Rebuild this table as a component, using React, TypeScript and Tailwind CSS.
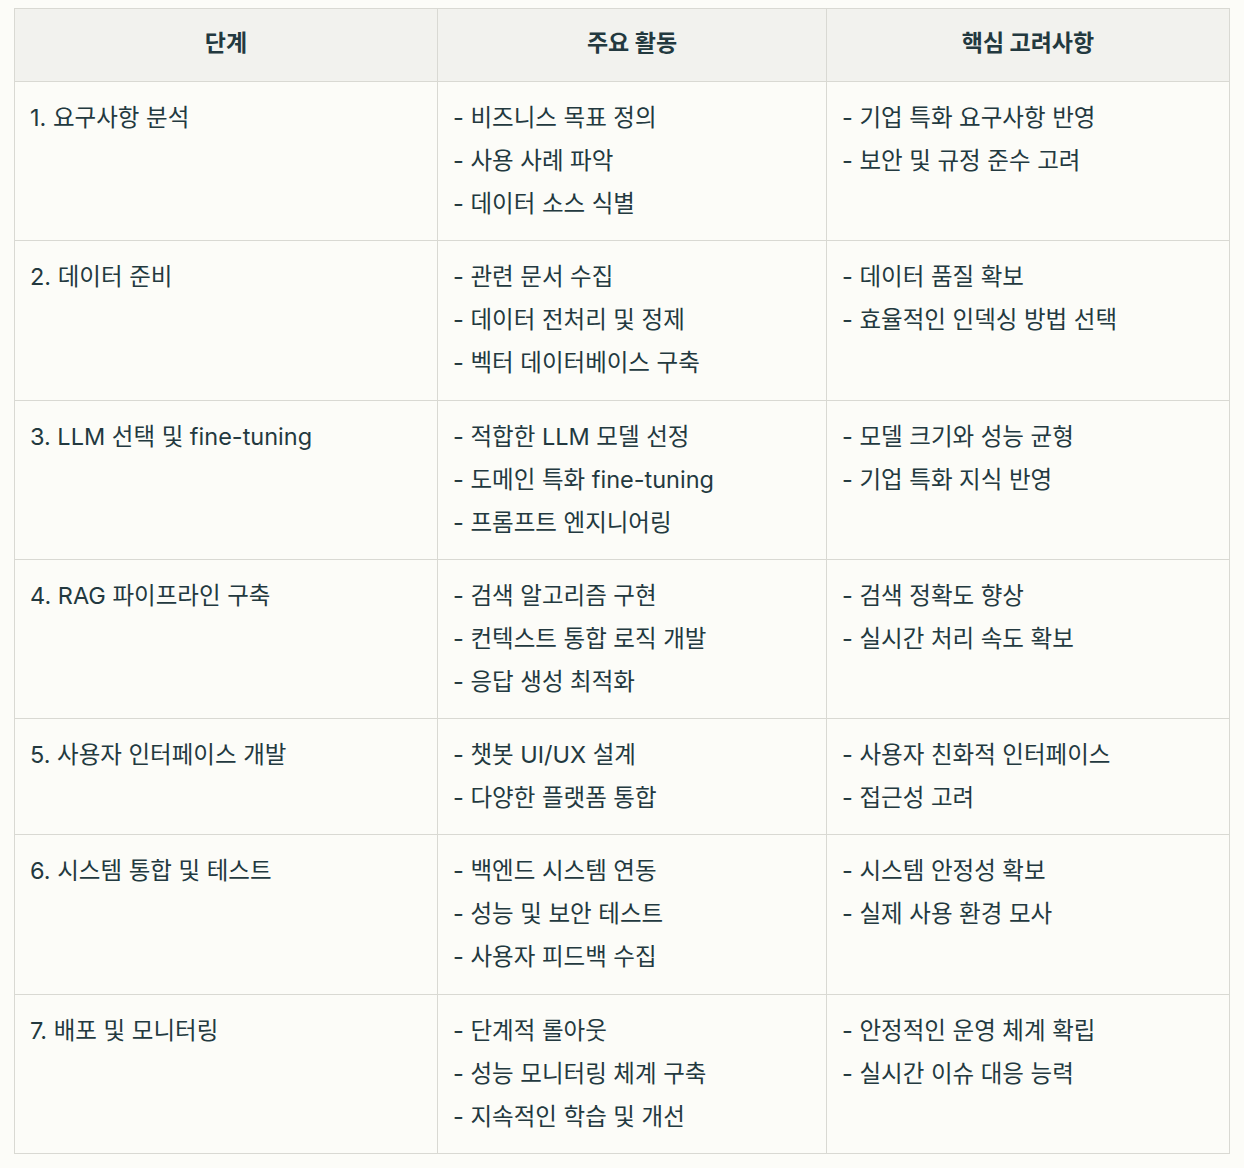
import React from 'react';

const rows: { step: string; acts: string[]; notes: string[] }[] = [
  { step: '1. 요구사항 분석', acts: ['비즈니스 목표 정의', '사용 사례 파악', '데이터 소스 식별'], notes: ['기업 특화 요구사항 반영', '보안 및 규정 준수 고려'] },
  { step: '2. 데이터 준비', acts: ['관련 문서 수집', '데이터 전처리 및 정제', '벡터 데이터베이스 구축'], notes: ['데이터 품질 확보', '효율적인 인덱싱 방법 선택'] },
  { step: '3. LLM 선택 및 fine-tuning', acts: ['적합한 LLM 모델 선정', '도메인 특화 fine-tuning', '프롬프트 엔지니어링'], notes: ['모델 크기와 성능 균형', '기업 특화 지식 반영'] },
  { step: '4. RAG 파이프라인 구축', acts: ['검색 알고리즘 구현', '컨텍스트 통합 로직 개발', '응답 생성 최적화'], notes: ['검색 정확도 향상', '실시간 처리 속도 확보'] },
  { step: '5. 사용자 인터페이스 개발', acts: ['챗봇 UI/UX 설계', '다양한 플랫폼 통합'], notes: ['사용자 친화적 인터페이스', '접근성 고려'] },
  { step: '6. 시스템 통합 및 테스트', acts: ['백엔드 시스템 연동', '성능 및 보안 테스트', '사용자 피드백 수집'], notes: ['시스템 안정성 확보', '실제 사용 환경 모사'] },
  { step: '7. 배포 및 모니터링', acts: ['단계적 롤아웃', '성능 모니터링 체계 구축', '지속적인 학습 및 개선'], notes: ['안정적인 운영 체계 확립', '실시간 이슈 대응 능력'] },
];

const cell = 'border border-[#d9d9d3] align-top px-[15px] pt-[14px] pb-[15.3px]';

export default function App() {
  return (
    <div className="min-h-[1168px] bg-[#fcfcf8] pt-2 pl-[14px] text-[#23393f] font-['Inter','Noto_Sans_CJK_KR',sans-serif] text-[23.5px] leading-[43px]">
      <table className="border-collapse table-fixed w-[1215px]">
        <colgroup>
          <col className="w-[423px]" />
          <col className="w-[389px]" />
          <col className="w-[403px]" />
        </colgroup>
        <thead>
          <tr className="bg-[#f2f2ee] h-[73px]">
            {['단계', '주요 활동', '핵심 고려사항'].map((h) => (
              <th key={h} className="border border-[#d9d9d3] font-bold text-center align-middle pb-[3px] text-[23px]">
                {h}
              </th>
            ))}
          </tr>
        </thead>
        <tbody>
          {rows.map((r) => (
            <tr key={r.step}>
              <td className={cell}>{r.step}</td>
              <td className={cell}>
                {r.acts.map((a) => (
                  <div key={a}>- {a}</div>
                ))}
              </td>
              <td className={cell}>
                {r.notes.map((n) => (
                  <div key={n}>- {n}</div>
                ))}
              </td>
            </tr>
          ))}
        </tbody>
      </table>
    </div>
  );
}
